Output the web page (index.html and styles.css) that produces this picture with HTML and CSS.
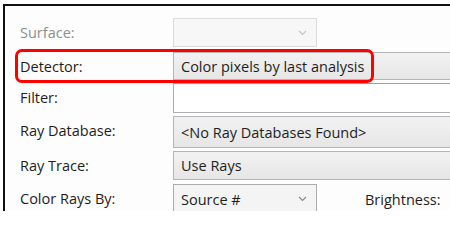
FILE: index.html
```html
<!DOCTYPE html>
<html>
<head>
<meta charset="utf-8">
<link rel="stylesheet" href="styles.css">
</head>
<body>
<div class="frame">
  <div class="form">
    <div class="label disabled">Surface:</div>
    <div class="cell"><div class="combo combo-disabled"><span></span><svg class="chev" width="9" height="6" viewBox="0 0 9 6"><path d="M1 1 L4.5 4.5 L8 1" fill="none" stroke="currentColor" stroke-width="1.2"/></svg></div></div>

    <div class="label">Detector:</div>
    <div class="cell"><div class="btn btn-detector">Color pixels by last analysis</div></div>

    <div class="label">Filter:</div>
    <div class="cell"><div class="textbox"></div></div>

    <div class="label">Ray Database:</div>
    <div class="cell"><div class="btn btn-db">&lt;No Ray Databases Found&gt;</div></div>

    <div class="label">Ray Trace:</div>
    <div class="cell"><div class="btn btn-trace">Use Rays</div></div>

    <div class="label">Color Rays By:</div>
    <div class="cell last">
      <div class="combo"><span>Source #</span><svg class="chev" width="9" height="6" viewBox="0 0 9 6"><path d="M1 1 L4.5 4.5 L8 1" fill="none" stroke="currentColor" stroke-width="1.2"/></svg></div>
      <div class="bright">Brightness:</div>
    </div>
  </div>
  <div class="highlight"></div>
</div>
</body>
</html>
```

FILE: styles.css
```css
html, body {
  margin: 0;
  padding: 0;
  background: #ffffff;
  overflow: hidden;
  width: 450px;
  height: 211px;
}

body {
  font-family: "Open Sans", "Noto Sans", sans-serif;
  font-size: 14.5px;
  color: #1e1e1e;
}

.frame {
  position: relative;
  margin: 4px 0 0 3px;
  width: 447px;
  height: 207px;
  border-top: 2px solid #111;
  border-left: 2px solid #111;
  background: #fdfdfd;
  padding-top: 12px;
  box-sizing: border-box;
  overflow: hidden;
}

.form {
  display: grid;
  grid-template-columns: 153px 1fr;
  grid-template-rows: 34px 31px 33px 35px 33px 30px;
  padding-left: 15px;
}

.label {
  height: 29px;
  display: flex;
  align-items: center;
  white-space: nowrap;
}

.disabled {
  color: #8d8d8d;
}

.cell {
  display: flex;
  align-items: flex-start;
  min-width: 0;
}

.combo {
  box-sizing: border-box;
  width: 144px;
  flex: none;
  height: 30px;
  border: 1px solid #acacac;
  background: #f4f4f4;
  display: flex;
  align-items: center;
  justify-content: space-between;
  padding: 0 9px 0 7px;
  color: #1e1e1e;
}

.combo .chev {
  color: #8a8a8a;
}

.combo-disabled {
  height: 29px;
  border-color: #dadada;
  background: #f7f7f7;
}

.combo-disabled .chev {
  color: #c4c4c4;
}

.btn {
  box-sizing: border-box;
  width: 100%;
  border: 1px solid #b5b5b5;
  border-right: none;
  background: linear-gradient(#f2f2f2, #e6e6e6);
  display: flex;
  align-items: center;
  padding-left: 7px;
  white-space: nowrap;
}

.btn-detector {
  height: 28px;
}

.btn-db {
  height: 32px;
}

.btn-trace {
  height: 29px;
}

.textbox {
  box-sizing: border-box;
  width: 100%;
  height: 30px;
  border: 1px solid #abadb3;
  border-right: none;
  border-top-color: #a0a0a0;
  background: #ffffff;
}

.last {
  align-items: flex-start;
}

.bright {
  margin-left: 48px;
  height: 30px;
  display: flex;
  align-items: center;
  white-space: nowrap;
}

.highlight {
  position: absolute;
  left: 10px;
  top: 43px;
  width: 359px;
  height: 34px;
  box-sizing: border-box;
  border: 3px solid #ff0000;
  border-radius: 7px;
}
```
